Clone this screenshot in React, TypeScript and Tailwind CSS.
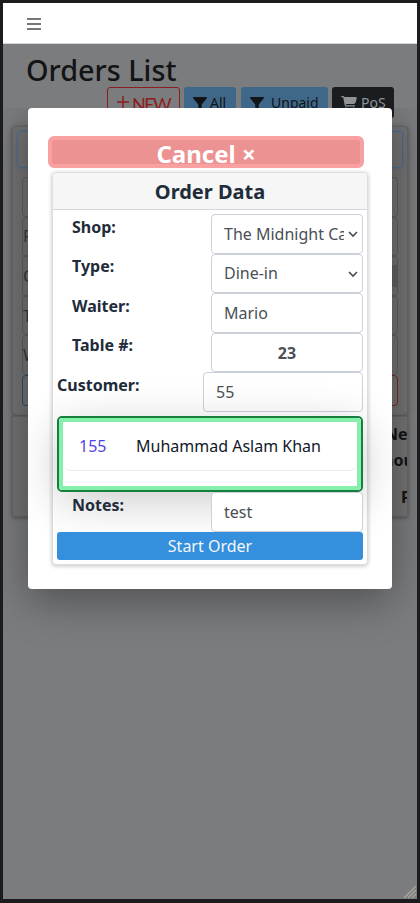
import React from "react";

const fieldClass =
  "block h-full w-full appearance-none rounded border border-[#cbd0db] bg-white pl-3 text-[16px] leading-6 text-[#4a5056] outline-none";

function Funnel() {
  return (
    <svg viewBox="0 0 512 512" className="h-[14px] w-[14px] shrink-0" fill="currentColor">
      <path d="M4 50C9 39 20 32 32 32h448c12 0 23 7 28 18s4 24-4 34L320 309v139c0 12-7 23-18 29s-24 4-33-3l-64-48c-8-6-13-16-13-26v-91L7 84C0 75-1 61 4 50z" />
    </svg>
  );
}

function Cart() {
  return (
    <svg viewBox="0 0 576 512" className="h-[14px] w-4 shrink-0" fill="currentColor">
      <path d="M0 24C0 11 11 0 24 0h46c22 0 41 13 51 32h411c26 0 45 25 39 50l-41 152c-9 32-38 54-70 54H171l5 29c2 11 12 19 24 19h288c13 0 24 11 24 24s-11 24-24 24H200c-35 0-65-25-71-59L77 54c-1-3-4-6-7-6H24C11 48 0 37 0 24zm128 440a48 48 0 1 1 96 0 48 48 0 1 1-96 0zm336-48a48 48 0 1 1 0 96 48 48 0 1 1 0-96z" />
    </svg>
  );
}

function Row({ label, children }: { label: string; children: React.ReactNode }) {
  return (
    <div className="flex h-[39.6px] justify-between">
      <span className="pl-[15px] pt-[0.5px] font-bold leading-6 text-[#212b3a]">{label}</span>
      <div className="relative h-full w-[152px]">{children}</div>
    </div>
  );
}

function SelectField({ value }: { value: string }) {
  return (
    <>
      <div className={fieldClass + " flex items-center"}>
        <span className="w-[120px] overflow-hidden whitespace-nowrap">{value}</span>
      </div>
      <svg
        viewBox="0 0 10 7"
        className="absolute right-[5px] top-[17px] h-[7px] w-[10px]"
        fill="none"
        stroke="#454b51"
        strokeWidth="1.6"
      >
        <path d="M1 1l4 4 4-4" />
      </svg>
    </>
  );
}

function OrderModal() {
  return (
    <div className="absolute left-[25px] top-[105px] flex h-[481px] w-[364px] flex-col overflow-hidden rounded bg-white pb-6 pl-5 pr-6 pt-7">
      <button className="flex h-8 w-[316px] shrink-0 items-center justify-center rounded-md border-4 border-[#f9a0a0] bg-[#ed9292] pt-[3px] text-2xl font-bold leading-none text-white">
        Cancel ×
      </button>
      <section className="ml-1 mt-1 h-[393px] w-[316px] shrink-0 rounded border border-[#dedede] bg-white shadow-[0_1px_4px_rgba(0,0,0,0.25)]">
        <h2 className="h-[37px] rounded-t border-b border-[#d5d8da] bg-[#f6f6f6] text-center text-xl font-bold leading-[37px] text-[#212b3a]">
          Order Data
        </h2>
        <div className="px-1 pt-1">
          <Row label="Shop:">
            <SelectField value="The Midnight Cafe" />
          </Row>
          <Row label="Type:">
            <SelectField value="Dine-in" />
          </Row>
          <Row label="Waiter:">
            <input className={fieldClass} defaultValue="Mario" />
          </Row>
          <Row label="Table #:">
            <input className={fieldClass + " pr-3 text-center font-bold"} defaultValue="23" />
          </Row>
          <div className="flex h-10 justify-between">
            <span className="pt-px font-bold leading-6 text-[#212b3a]">Customer:</span>
            <input className={fieldClass + " max-w-[160px]"} defaultValue="55" />
          </div>
          <div className="relative mt-1 h-[76px] rounded-[5px] border-2 border-[#15803d] bg-white shadow-[0_10px_46px_rgba(0,0,0,0.2)]">
            <div className="h-full rounded-sm border-4 border-[#86efac]">
              <div className="flex h-[49px] items-center rounded-b-lg border-b border-[#ececee]">
                <span className="w-[57px] pl-4 text-[#4f46e5]">155</span>
                <span className="pl-4 text-[#111827]">Muhammad Aslam Khan</span>
              </div>
            </div>
          </div>
          <div className="relative">
            <Row label="Notes:">
              <input className={fieldClass} defaultValue="test" />
            </Row>
            <button className="block h-7 w-full rounded-[3px] bg-[#3490dc] text-center leading-7 text-[#f3f7fb]">
              Start Order
            </button>
          </div>
        </div>
      </section>
    </div>
  );
}

const filters = ["", "F", "C", "T", "W"];

export default function App() {
  return (
    <div className="relative flex h-[903px] w-[420px] flex-col overflow-hidden border-[3px] border-b-4 border-[#1c1b1d] bg-[#7b7c7e] font-['Noto_Sans',sans-serif] text-base">
      <nav className="flex h-[41px] shrink-0 items-center border-b border-[#d5d8da] bg-white pl-6">
        <svg viewBox="0 0 14 12" className="mt-px h-3 w-[14px]" stroke="#777" strokeWidth="1.8">
          <path d="M0 1h14M0 6h14M0 11h14" />
        </svg>
      </nav>
      <h1 className="h-[43px] shrink-0 pl-[23px] pt-2 text-[28.8px] font-medium leading-[36px] text-[#131416]">
        Orders List
      </h1>
      <div className="flex h-[31px] shrink-0 pl-[104px] text-sm leading-[30px]">
        <div className="mr-1 flex w-[73px] items-start rounded-[3px] border border-[#8d1c20] pl-[9px] text-[#8d1c20]">
          <svg viewBox="0 0 12 12" className="mr-[3px] mt-[8px] h-3 w-3 shrink-0" stroke="currentColor" strokeWidth="1.5">
            <path d="M6 0v12M0 6h12" />
          </svg>
          <span className="font-['Lato',sans-serif] text-[18px] leading-[32px] tracking-[-1.6px]">NEW</span>
        </div>
        <div className="mr-[5px] flex w-[52px] items-center rounded-[3px] bg-[#3e678a] pl-[9px] text-[#131416]">
          <Funnel />
          <span className="ml-[3px]">All</span>
        </div>
        <div className="mr-1 flex w-[87px] items-center rounded-[3px] bg-[#3e678a] pl-[9px] text-[#131416]">
          <Funnel />
          <span className="ml-[7px]">Unpaid</span>
        </div>
        <div className="flex w-[62px] items-center rounded-[3px] bg-[#1a1d20] pl-[9px] text-[#929394]">
          <Cart />
          <span className="ml-1">PoS</span>
        </div>
      </div>
      <div className="mx-[9px] mt-2 h-[290px] shrink-0 rounded border border-[#666769] bg-[#747475] px-[9px] pt-1 shadow-[0_1px_5px_rgba(0,0,0,0.35)]">
        <div className="-mx-[5px] mb-[9px] h-[37px] rounded border border-[#516d92] shadow-[0_0_3px_#516d92]" />
        {filters.map((text, i) => (
          <div key={i} className="flex h-[39.6px] items-center justify-between rounded border border-[#5d6064] text-[#37393b]">
            <span>{text}</span>
            {text === "C" && <span className="h-[22px] w-2 bg-[#626365]" />}
          </div>
        ))}
        <div className="flex h-[31px] justify-between">
          <span className="w-20 rounded border border-[#1e527e]" />
          <span className="w-20 rounded border border-[#872428]" />
        </div>
      </div>
      <div className="mx-[9px] flex h-[101px] shrink-0 flex-col items-end overflow-hidden border border-[#666769] bg-[#747475] font-bold leading-[26px] text-[#131416] shadow-[0_1px_4px_rgba(0,0,0,0.35)]">
        <div className="w-[22px] shrink-0 whitespace-nowrap pt-1">New</div>
        <div className="w-[24px] shrink-0 whitespace-nowrap">nount</div>
        <div className="w-[6px] shrink-0 whitespace-nowrap pt-[11px]">Paid</div>
      </div>
      <div className="pointer-events-none absolute left-[25px] top-[105px] h-[481px] w-[364px] rounded shadow-[0_10px_44px_rgba(0,0,0,0.38)] [clip-path:inset(0_-60px_-80px_-60px)]" />
      <OrderModal />
      <svg viewBox="0 0 14 14" className="absolute bottom-0 right-0 h-[14px] w-[14px]" stroke="#a7a8a2" strokeWidth="1.3">
        <path d="M1 13L13 1M5 13l8-8M9 13l4-4" />
      </svg>
    </div>
  );
}
